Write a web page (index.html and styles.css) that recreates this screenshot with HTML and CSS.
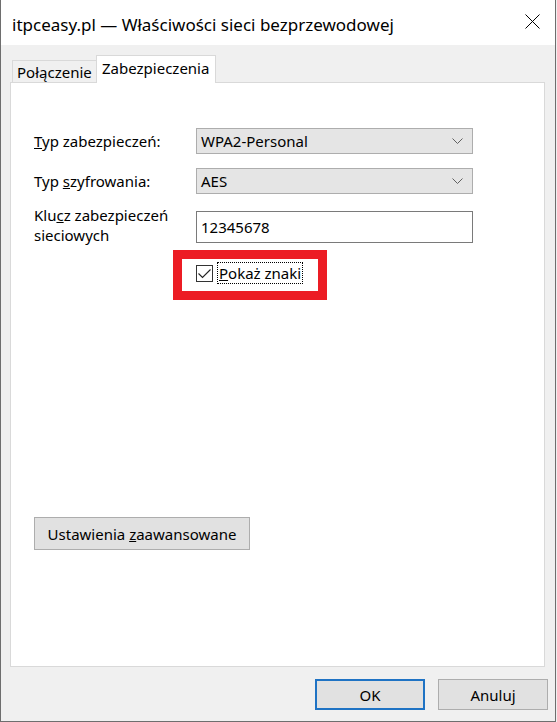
FILE: index.html
```html
<!DOCTYPE html>
<html lang="pl">
<head>
    <meta charset="UTF-8">
    <meta name="viewport" content="width=device-width, initial-scale=1.0">
    <title>Właściwości sieci bezprzewodowej</title>
    <link rel="stylesheet" href="styles.css">
</head>
<body>
    <div class="window">
        <div class="titlebar">
            <span class="title">itpceasy.pl — Właściwości sieci bezprzewodowej</span>
            <svg class="close" width="15" height="15" viewBox="0 0 15 15">
                <path d="M0.5 0.5 L14.5 14.5 M14.5 0.5 L0.5 14.5" stroke="#000" stroke-width="1" fill="none"/>
            </svg>
        </div>

        <div class="tabs">
            <div class="tab">Połączenie</div>
            <div class="tab active">Zabezpieczenia</div>
        </div>

        <div class="panel">
            <div class="form">
                <label class="label"><u>T</u>yp zabezpieczeń:</label>
                <div class="combo">
                    <span>WPA2-Personal</span>
                    <svg width="11" height="6" viewBox="0 0 11 6"><polyline points="0.5,0.5 5.5,5.5 10.5,0.5" stroke="#606060" fill="none"/></svg>
                </div>

                <label class="label">Typ <u>s</u>zyfrowania:</label>
                <div class="combo">
                    <span>AES</span>
                    <svg width="11" height="6" viewBox="0 0 11 6"><polyline points="0.5,0.5 5.5,5.5 10.5,0.5" stroke="#606060" fill="none"/></svg>
                </div>

                <label class="label label-top">Klu<u>c</u>z zabezpieczeń<br>sieciowych</label>
                <div class="textbox">12345678</div>
            </div>

            <div class="show-row">
                <span class="checkbox">
                    <svg width="15" height="15" viewBox="0 0 15 15"><polyline points="1.5,7.5 5.5,11.5 13.5,3.5" stroke="#222" stroke-width="1.1" fill="none"/></svg>
                </span>
                <span class="check-label"><u>P</u>okaż znaki</span>
                <div class="highlight"></div>
            </div>

            <button class="btn advanced">Ustawienia <u>z</u>aawansowane</button>
        </div>

        <div class="footer">
            <button class="btn default">OK</button>
            <button class="btn">Anuluj</button>
        </div>
    </div>
</body>
</html>
```

FILE: styles.css
```css
body {
    margin: 0;
    background: #f0f0f0;
    font-family: "Noto Sans", "Open Sans", sans-serif;
    font-size: 15px;
    color: #000;
}

.window {
    width: 556px;
    height: 722px;
    box-sizing: border-box;
    border-left: 1px solid #6e6e6e;
    border-right: 1px solid #6e6e6e;
    border-bottom: 1px solid #6e6e6e;
    background: #f0f0f0;
}

.titlebar {
    height: 45px;
    background: #fff;
    display: flex;
    align-items: center;
    padding: 0 15px 0 11px;
}

.title {
    flex: 1;
    font-size: 17px;
    margin-top: 4px;
}

.close {
    margin-top: -2px;
}

/* tabs */
.tabs {
    display: flex;
    align-items: flex-end;
    height: 27px;
    margin-top: 10px;
    padding-left: 11px;
    position: relative;
    z-index: 1;
}

.tab {
    height: 22px;
    line-height: 22px;
    padding: 0 4px;
    border: 1px solid #d9d9d9;
    border-bottom: none;
    border-right: none;
    background: #f0f0f0;
    box-sizing: border-box;
    width: 84px;
}

.tab.active {
    height: 28px;
    line-height: 25px;
    width: 120px;
    padding: 0 5px;
    border-right: 1px solid #d9d9d9;
    background: #fff;
    margin-bottom: -1px;
}

.panel {
    width: 535px;
    height: 585px;
    box-sizing: border-box;
    margin-left: 9px;
    background: #fff;
    border: 1px solid #d9d9d9;
    padding: 45px 0 0 23px;
    display: flex;
    flex-direction: column;
    align-items: flex-start;
}

/* form rows */
.form {
    display: grid;
    grid-template-columns: 162px 277px;
    row-gap: 14px;
    align-items: center;
}

.label-top {
    align-self: start;
    line-height: 20px;
    margin-top: -3px;
}

.combo {
    height: 26px;
    box-sizing: border-box;
    background: #e5e5e5;
    border: 1px solid #adadad;
    display: flex;
    align-items: center;
    justify-content: space-between;
    padding: 0 9px 0 4px;
}

.textbox {
    height: 32px;
    box-sizing: border-box;
    background: #fff;
    border: 1px solid #7a7a7a;
    display: flex;
    align-items: center;
    padding: 0 4px;
}

.show-row {
    position: relative;
    display: flex;
    align-items: center;
    margin: 17px 0 0 162px;
    height: 22px;
}

.checkbox {
    width: 17px;
    height: 17px;
    box-sizing: border-box;
    border: 1px solid #333;
    display: flex;
    align-items: center;
    justify-content: center;
    background: #fff;
}

.check-label {
    margin-left: 5px;
    outline: 1px dotted #000;
    outline-offset: 0;
    padding: 0 1px;
    line-height: 20px;
}

.highlight {
    position: absolute;
    left: -23px;
    top: -12px;
    width: 154px;
    height: 50px;
    box-sizing: border-box;
    border: 9px solid #ec1c24;
}

/* buttons */
.btn {
    width: 110px;
    height: 31px;
    background: #e1e1e1;
    border: 1px solid #adadad;
    font: inherit;
    color: #000;
    padding: 0;
}

.btn.default {
    border: 2px solid #1f73c4;
}

.advanced {
    width: 216px;
    height: 33px;
    margin-top: 233px;
}

.footer {
    display: flex;
    justify-content: flex-end;
    gap: 13px;
    padding: 12px 7px 0 0;
}
```
